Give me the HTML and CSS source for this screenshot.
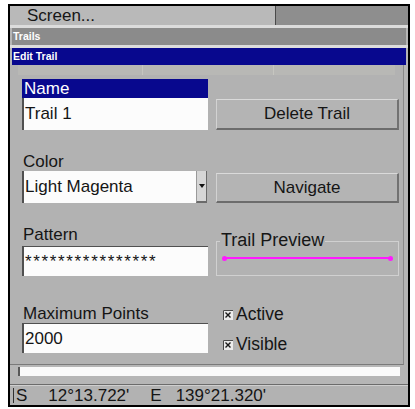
FILE: index.html
```html
<!DOCTYPE html>
<html>
<head>
<meta charset="utf-8">
<link rel="stylesheet" href="styles.css">
</head>
<body>
<div class="frame">
  <div class="screenbar">
    <div class="screen-left">Screen...</div>
    <div class="screen-right"></div>
  </div>
  <div class="sep"></div>
  <div class="titlebar trails">Trails</div>
  <div class="sep"></div>
  <div class="titlebar edit">Edit Trail</div>
  <div class="panel">
    <div class="ghost"><span></span><span></span></div>

    <div class="row row1">
      <div class="field">
        <div class="label label-sel">Name</div>
        <div class="input input-tall">Trail 1</div>
      </div>
      <div class="button btn-delete">Delete Trail</div>
    </div>

    <div class="row row2">
      <div class="field">
        <div class="label">Color</div>
        <div class="select">
          <div class="select-text">Light Magenta</div>
          <div class="select-arrow"><span class="tri"></span></div>
        </div>
      </div>
      <div class="button btn-nav">Navigate</div>
    </div>

    <div class="row row3">
      <div class="field">
        <div class="label label-gap">Pattern</div>
        <div class="input input-top stars">****************</div>
      </div>
      <div class="preview">
        <div class="legend">Trail Preview</div>
        <div class="line"><span class="dot dot-l"></span><span class="dot dot-r"></span></div>
      </div>
    </div>

    <div class="row row4">
      <div class="field">
        <div class="label">Maximum Points</div>
        <div class="input input-top">2000</div>
      </div>
      <div class="checks">
        <div class="check">
          <svg class="cb" width="10" height="10" viewBox="0 0 10 10">
            <rect x="0" y="0" width="10" height="10" fill="#ececec"/>
            <path d="M0.5 10V0.5H10" fill="none" stroke="#4a4a4a" stroke-width="1"/>
            <path d="M2.5 2.5L7.5 7.5M7.5 2.5L2.5 7.5" stroke="#1a1a1a" stroke-width="1.4"/>
          </svg>
          <span>Active</span>
        </div>
        <div class="check check2">
          <svg class="cb" width="10" height="10" viewBox="0 0 10 10">
            <rect x="0" y="0" width="10" height="10" fill="#ececec"/>
            <path d="M0.5 10V0.5H10" fill="none" stroke="#4a4a4a" stroke-width="1"/>
            <path d="M2.5 2.5L7.5 7.5M7.5 2.5L2.5 7.5" stroke="#1a1a1a" stroke-width="1.4"/>
          </svg>
          <span>Visible</span>
        </div>
      </div>
    </div>
  </div>
  <div class="whitebar"></div>
  <div class="status-top"></div>
  <div class="status">
    <span class="vbar"></span>
    <span class="lat-h">S</span>
    <span class="lat">12°13.722'</span>
    <span class="lon-h">E</span>
    <span class="lon">139°21.320'</span>
  </div>
</div>
</body>
</html>
```

FILE: styles.css
```css
html, body {
  margin: 0;
  padding: 0;
  background: #ffffff;
}

body {
  font-family: "Liberation Sans", Arial, sans-serif;
  color: #151515;
}

.frame {
  margin: 4px 0 0 8px;
  width: 402px;
  height: 403px;
  box-sizing: border-box;
  border: 2px solid #000;
  background: #b6b6b6;
  display: flex;
  flex-direction: column;
  overflow: hidden;
}

.screenbar {
  height: 19px;
  display: flex;
  flex: none;
}

.screen-left {
  width: 266px;
  box-sizing: border-box;
  padding-left: 17px;
  background: #b9b9b9;
  border-right: 1px solid #4a4a4a;
  font-size: 17px;
  line-height: 19px;
  color: #161616;
}

.screen-right {
  flex: 1;
  background: #8e8e8e;
}

.sep {
  height: 3px;
  flex: none;
  background: #dcdcdc;
}

.titlebar {
  height: 17px;
  flex: none;
  margin: 0 2px;
  padding-left: 1px;
  font-size: 10.5px;
  font-weight: bold;
  line-height: 17px;
  color: #ffffff;
}

.trails {
  background: #8b8b8b;
}

.edit {
  background: #08088e;
}

.panel {
  height: 300px;
  flex: none;
  box-sizing: border-box;
  margin-right: 4px;
  padding-left: 12px;
  background: #b2b2b2;
  border-right: 1px solid #8a8a8a;
  border-bottom: 1px solid #7a7a7a;
}

.ghost {
  height: 10px;
  margin: 0 8px 0 -4px;
  background: #b8b8b5;
  display: flex;
  gap: 130px;
  padding-left: 124px;
}

.ghost span {
  width: 1px;
  height: 10px;
  background: #c6c6c0;
}

.row {
  display: grid;
  grid-template-columns: 186px 183px;
  column-gap: 8px;
  align-items: end;
}

.row1 { margin-top: 4px; }
.row2 { margin-top: 22px; }
.row3 { margin-top: 22px; }
.row4 { margin-top: 28px; align-items: start; }

.field {
  display: flex;
  flex-direction: column;
}

.label {
  height: 19px;
  font-size: 17px;
  line-height: 19px;
  padding-left: 1px;
}

.label-sel {
  background: #08088e;
  color: #ffffff;
  padding-left: 2px;
}

.label-gap {
  margin-bottom: 2px;
}

.input {
  height: 30px;
  box-sizing: border-box;
  background: #fcfcfc;
  border-left: 2px solid #505050;
  padding-left: 1px;
  font-size: 17px;
  line-height: 30px;
}

.input-tall {
  height: 32px;
  line-height: 32px;
}

.input-top {
  border-top: 1px solid #505050;
  line-height: 29px;
}

.stars {
  letter-spacing: 1.65px;
}

.select {
  height: 32px;
  display: flex;
  background: #fcfcfc;
  border-left: 2px solid #505050;
  margin-right: 1px;
}

.select-text {
  flex: 1;
  padding-left: 1px;
  font-size: 17px;
  line-height: 32px;
}

.select-arrow {
  width: 11px;
  box-sizing: border-box;
  background: #d6d6d6;
  border-left: 1px solid #9a9a9a;
  border-right: 1px solid #6a6a6a;
  border-bottom: 2px solid #6a6a6a;
  display: flex;
  align-items: center;
  justify-content: center;
}

.tri {
  width: 0;
  height: 0;
  border-left: 3px solid transparent;
  border-right: 3px solid transparent;
  border-top: 4px solid #111;
}

.button {
  box-sizing: border-box;
  background: #b4b4b4;
  border-top: 1px solid #dadada;
  border-left: 1px solid #d2d2d2;
  border-right: 2px solid #727272;
  border-bottom: 2px solid #6c6c6c;
  text-align: center;
  font-size: 17px;
  color: #151515;
}

.btn-delete {
  height: 31px;
  line-height: 28px;
}

.btn-nav {
  height: 30px;
  line-height: 27px;
}

.preview {
  position: relative;
  height: 35px;
  box-sizing: border-box;
  border: 1px solid #d0d0d0;
  padding: 15px 6px 0 6px;
}

.legend {
  position: absolute;
  top: -12px;
  left: 3px;
  padding: 0 1px;
  background: #b2b2b2;
  font-size: 18px;
  line-height: 20px;
  color: #161616;
}

.line {
  position: relative;
  height: 2px;
  background: #ff19ff;
}

.dot {
  position: absolute;
  top: -1.5px;
  width: 5px;
  height: 5px;
  border-radius: 50%;
  background: #ff19ff;
}

.dot-l { left: -1px; }
.dot-r { right: -1px; }

.checks {
  padding-left: 7px;
  margin-top: 1px;
  display: flex;
  flex-direction: column;
  gap: 11px;
}

.check {
  display: flex;
  align-items: center;
  height: 19px;
  font-size: 17.5px;
  line-height: 19px;
}

.cb {
  flex: none;
  margin-right: 3px;
}

.whitebar {
  height: 9px;
  flex: none;
  margin: 2px 8px 0 8px;
  background: #fafafa;
  border-left: 2px solid #585858;
}

.status-top {
  height: 1px;
  flex: none;
  margin-top: 8px;
  background: #6c6c6c;
  border-bottom: 1px solid #cfcfcf;
}

.status {
  flex: 1;
  display: flex;
  align-items: center;
  padding-left: 3px;
  background: #b2b2b2;
  font-size: 17px;
  line-height: 19px;
  color: #151515;
}

.vbar {
  width: 1px;
  height: 15px;
  background: #303030;
}

.lat-h { margin-left: 2px; }
.lat { margin-left: 21px; }
.lon-h { margin-left: 21px; }
.lon { margin-left: 14px; }
```
